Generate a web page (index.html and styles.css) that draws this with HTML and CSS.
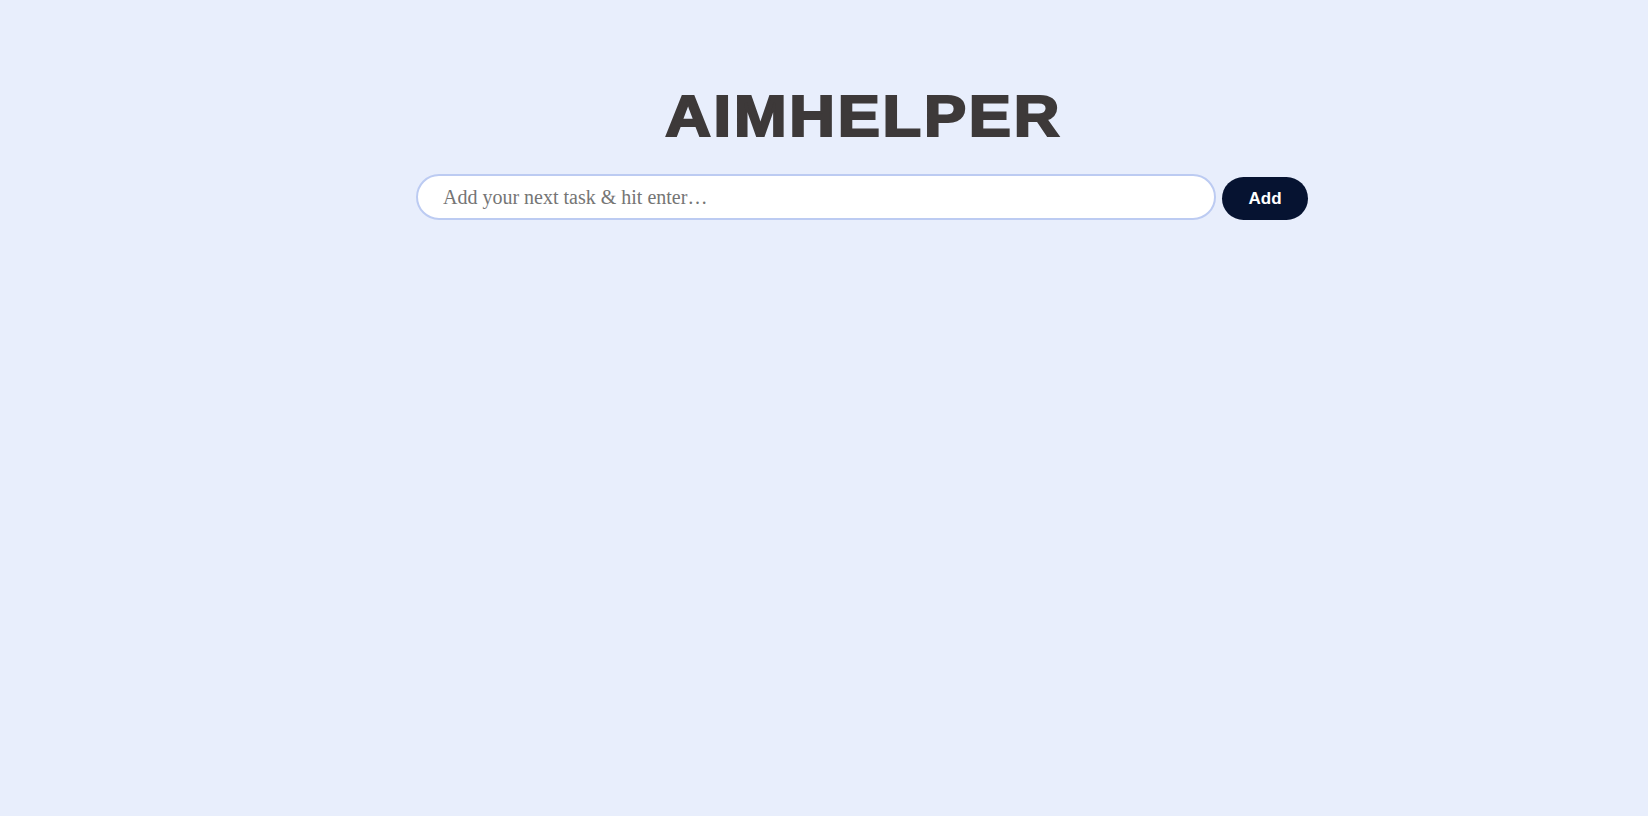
FILE: index.html
```html
<!DOCTYPE html>
<html lang="en">
<head>
<meta charset="utf-8">
<title>AimHelper</title>
<link rel="stylesheet" href="styles.css">
</head>
<body>
<main class="app">
  <h1 class="title"><span class="title-text">AIMHELPER</span></h1>
  <form class="task-form" onsubmit="return false">
    <input class="task-input" type="text" placeholder="Add your next task &amp; hit enter…">
    <button class="add-btn" type="submit">Add</button>
  </form>
</main>
</body>
</html>
```

FILE: styles.css
```css
html, body {
  margin: 0;
  padding: 0;
  height: 100%;
}
body {
  background: #e8eefc;
  font-family: "Liberation Sans", Arial, sans-serif;
}
.app {
  width: 892px;
  margin-left: calc(50% - 408px);
  padding-top: 81px;
  display: flex;
  flex-direction: column;
  align-items: center;
}
.title {
  margin: 0;
  font-size: 58px;
  font-weight: bold;
  color: #3d3939;
  line-height: 70px;
  text-align: center;
}
.title-text {
  display: inline-block;
  letter-spacing: 2.5px;
  padding-left: 2.5px;
  -webkit-text-stroke: 2.2px #3d3939;
  transform: scaleX(1.09);
}
.task-form {
  margin-top: 23px;
  display: flex;
  align-items: flex-end;
  gap: 6px;
  width: 100%;
}
.task-input {
  box-sizing: border-box;
  width: 800px;
  height: 46px;
  border: 2px solid #bccbf2;
  border-radius: 23px;
  background: #fff;
  padding: 0 25px;
  font-family: "Liberation Serif", "Times New Roman", serif;
  font-size: 20px;
  color: #333;
  outline: none;
}
.task-input::placeholder {
  color: #757575;
}
.add-btn {
  box-sizing: border-box;
  width: 86px;
  height: 43px;
  border: none;
  border-radius: 22px;
  background: #061331;
  color: #fff;
  font-family: "Liberation Sans", Arial, sans-serif;
  font-weight: bold;
  font-size: 17px;
  cursor: pointer;
}
```
